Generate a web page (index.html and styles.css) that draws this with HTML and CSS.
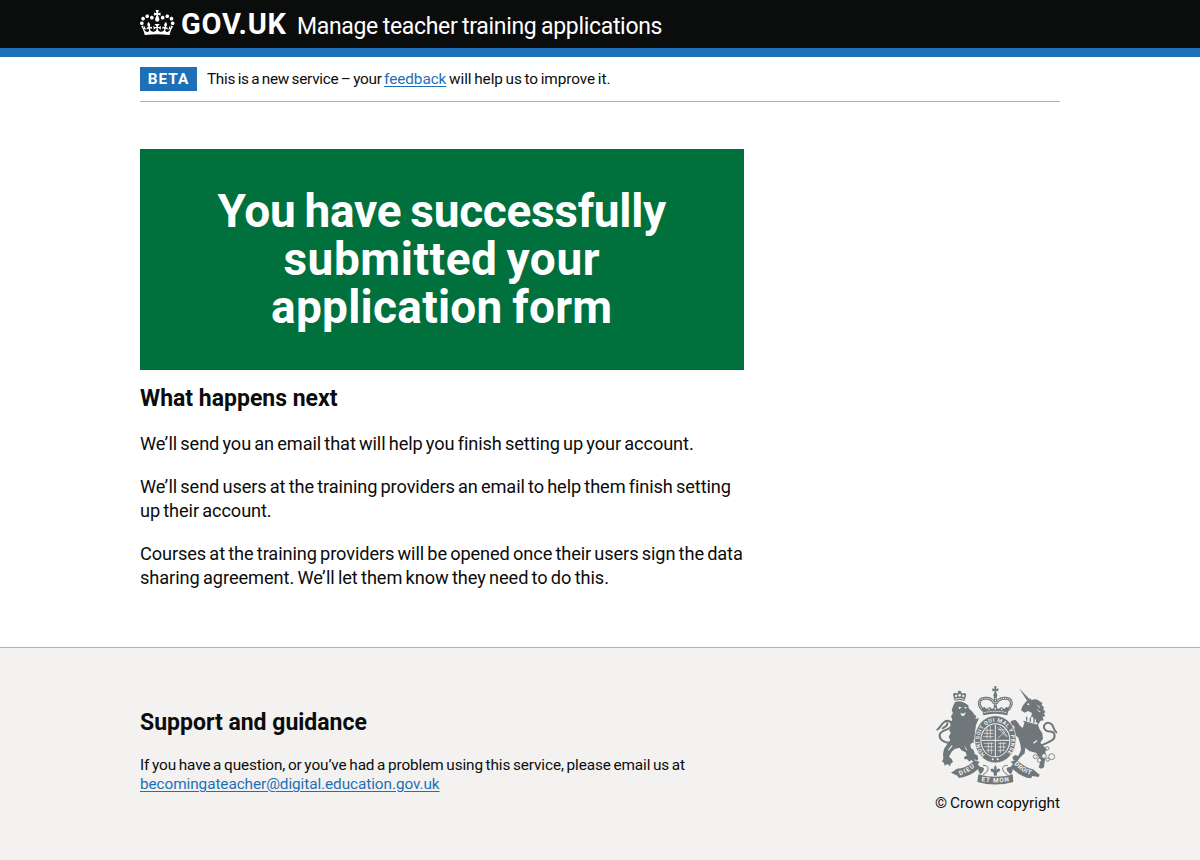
FILE: index.html
```
<!DOCTYPE html>
<html lang="en">
<head>
<meta charset="utf-8">
<title>Manage teacher training applications</title>
<link rel="stylesheet" href="styles.css">
</head>
<body>
<header class="header">
  <div class="container header-inner">
    <svg class="header-crown" viewBox="0 0 132 97" aria-hidden="true"><path fill="currentColor" fill-rule="evenodd" d="M25 30.2c3.5 1.5 7.7-.2 9.1-3.7 1.5-3.6-.2-7.8-3.9-9.2-3.6-1.4-7.6.3-9.1 3.9-1.4 3.5.3 7.5 3.9 9zM9 39.5c3.6 1.5 7.8-.2 9.2-3.7 1.5-3.6-.2-7.8-3.9-9.1-3.6-1.5-7.6.2-9.1 3.8-1.4 3.5.3 7.5 3.8 9zM4.4 57.2c3.5 1.5 7.7-.2 9.1-3.8 1.5-3.6-.2-7.7-3.9-9.1-3.5-1.5-7.6.3-9.1 3.8-1.4 3.5.3 7.6 3.9 9.1zm38.3-21.4c3.5 1.5 7.7-.2 9.1-3.8 1.5-3.6-.2-7.7-3.9-9.1-3.6-1.5-7.6.3-9.1 3.8-1.3 3.6.4 7.7 3.9 9.1zm64.4-5.6c-3.6 1.5-7.8-.2-9.1-3.7-1.5-3.6.2-7.8 3.8-9.2 3.6-1.4 7.7.3 9.2 3.9 1.3 3.5-.4 7.5-3.9 9zm15.9 9.3c-3.6 1.5-7.7-.2-9.1-3.7-1.5-3.6.2-7.8 3.7-9.1 3.6-1.5 7.7.2 9.2 3.8 1.5 3.5-.3 7.5-3.8 9zm4.7 17.7c-3.6 1.5-7.8-.2-9.2-3.8-1.5-3.6.2-7.7 3.9-9.1 3.6-1.5 7.7.3 9.2 3.8 1.3 3.5-.4 7.6-3.9 9.1zM89.3 35.8c-3.6 1.5-7.8-.2-9.2-3.8-1.4-3.6.2-7.7 3.9-9.1 3.6-1.5 7.7.3 9.2 3.8 1.4 3.6-.3 7.7-3.9 9.1zM69.7 17.7l8.9 4.7V9.3l-8.9 2.8c-.2-.3-.5-.6-.9-.9L72.4 0H59.6l3.5 11.2c-.3.3-.6.5-.9.9l-8.8-2.8v13.1l8.8-4.7c.3.3.6.7.9.9l-5 15.4v.1c-.2.8-.4 1.6-.4 2.4 0 4.1 3.1 7.5 7 8.1h.2c.3 0 .7.1 1 .1.4 0 .7 0 1-.1h.2c4-.6 7.1-4.1 7.1-8.1 0-.8-.1-1.7-.4-2.4V34l-5.1-15.4c.4-.2.7-.6 1-.9zM66 92.8c16.9 0 32.8 1.1 47.1 3.2 4-16.9 8.9-26.7 14-33.5l-9.6-3.4c1 4.9 1.1 7.2 0 10.2-1.5-1.4-3-4.3-4.2-8.7L108.6 76c2.8-2 5-3.2 7.5-3.3-4.4 9.4-10 11.9-13.6 11.2-4.3-.8-6.3-4.6-5.6-7.9 1-4.7 5.7-5.9 8-.5 4.3-8.7-3-11.4-7.6-8.8 7.1-7.2 7.9-13.5 2.1-21.1-8 6.1-8.1 12.3-4.5 20.8-4.7-5.4-12.1-2.5-9.5 6.2 3.4-5.2 7.9-2 7.2 3.1-.6 4.3-6.4 7.8-13.5 7.2-10.3-.9-10.9-8-11.2-13.8 2.5-.5 7.1 1.8 11 7.3L80.2 60c-4.1 4.4-8 5.3-12.3 5.4 1.4-4.4 8-11.6 8-11.6H55.5s6.4 7.2 7.9 11.6c-4.2-.1-8-1-12.3-5.4l1.4 16.4c3.9-5.5 8.5-7.7 10.9-7.3-.3 5.8-.9 12.8-11.1 13.8-7.2.6-12.9-2.9-13.5-7.2-.7-5 3.8-8.3 7.1-3.1 2.7-8.7-4.6-11.6-9.4-6.2 3.7-8.5 3.6-14.7-4.6-20.8-5.8 7.6-5 13.9 2.2 21.1-4.7-2.6-11.9.1-7.7 8.8 2.3-5.5 7.1-4.2 8.1.5.7 3.3-1.3 7.1-5.7 7.9-3.5.7-9-1.8-13.5-11.2 2.5.1 4.7 1.3 7.5 3.3l-4.7-15.4c-1.2 4.4-2.7 7.2-4.3 8.7-1.1-3-.9-5.3 0-10.2l-9.5 3.4c5 6.9 9.9 16.7 14 33.5 14.8-2.1 30.8-3.2 47.7-3.2z"/></svg>
    <span class="logotype">GOV.UK</span>
    <span class="product">Manage teacher training applications</span>
  </div>
</header>
<div class="blue-bar"></div>

<div class="container">
  <div class="phase">
    <strong class="tag">BETA</strong>
    <span class="phase-text"><span class="tight">This is a new service – your </span><a href="#">feedback</a> will help us to improve it.</span>
  </div>
  <main class="main">
    <div class="panel">
      <h1 class="panel-title"><span class="title-a">You have successfully</span><span class="title-b">submitted your</span><span class="title-c">application form</span></h1>
    </div>
    <h2 class="heading">What happens next</h2>
    <p class="body">We’ll send you an email that will help you finish setting up your account.</p>
    <p class="body">We’ll send users at the training providers an email to help them finish setting<br>up their account.</p>
    <p class="body">Courses at the training providers will be opened once their users sign the data<br><span class="body-last">sharing agreement. We’ll let them know they need to do this.</span></p>
  </main>
</div>

<footer class="footer">
  <div class="container footer-inner">
    <div class="support">
      <h2 class="heading">Support and guidance</h2>
      <p class="small">If you have a question, or you’ve had a problem using this service, please email us at<br><a class="email" href="#">becomingateacher@digital.education.gov.uk</a></p>
    </div>
    <div class="crown-copyright">
      <svg class="crest" viewBox="30 15 375 306" aria-hidden="true">
        <defs>
          <path id="garter" d="M180 224A48 56 0 1 1 242 224"/>
          <path id="scroll-left" d="M104 286Q132 278 155 255"/>
          <path id="scroll-mid" d="M169 303Q211 312 254 303"/>
          <path id="scroll-right" d="M267 253Q291 278 324 287"/>
        </defs>
        <!-- lion -->
        <g class="ink">
          <path d="M89 62L84 45Q83 40 88 39Q94 37 96 42Q98 36 104 36Q110 36 112 41Q116 37 121 40Q125 42 123 48L118 63Q103 57 89 62Z"/>
          <path d="M101 32h5v8h-5zM98 34h11v3h-11z"/>
          <path d="M90 66Q104 60 118 68L130 76L131 85L143 96L147 103L154 109L151 117L162 114L158 124L153 135L151 150L149 162L154 178L146 178L146 188Q139 187 136 194L138 205Q148 209 149 222L157 226L160 235L157 242L149 238L147 246L139 240L133 245L127 238L119 238L117 231L125 227L122 217L109 211L104 203L89 207L80 215L72 230L80 237L84 246L77 251L75 259L67 252L59 257L57 249L51 244L55 236L54 221L57 207L67 192L76 180L71 171L77 158L72 150L80 140L75 129L82 119L78 109L84 99L80 91L84 79Z"/>
          <path d="M131 145L154 160L164 174L156 179L149 174L139 185L127 173Z"/>
        </g>
        <g class="tail">
          <path d="M76 189C53 187 42 177 44 164C47 148 79 151 80 135C81 124 67 119 58 126C48 132 44 146 37 149"/>
          <path d="M53 145C59 139 68 139 67 130"/>
        </g>
        <g class="paper">
          <circle cx="93" cy="48" r="3.5"/><circle cx="104" cy="46" r="4"/><circle cx="115" cy="48" r="3.5"/>
          <path d="M90 56Q104 51 117 57L116 59Q104 54 91 59Z"/>
          <path d="M100 80l10 2-7 6zM118 82l8-2-5 7zM106 98l8 3 8-4-3 9-8 3z"/>
          <path d="M69 209l11-13 3 2-12 14zM117 196l10 14-3 1z"/>
        </g>
        <!-- unicorn -->
        <g class="ink">
          <path d="M282 25L314 58L307 63Z"/>
          <path d="M304 64L318 55L319 61Q334 54 344 64L352 69L350 75L358 83L354 87L362 97L356 99L361 109L353 110L356 121L347 122L339 134L343 146L352 160L354 176L346 188L357 200L369 207L361 214L362 229L359 245L357 262L348 266L341 262L345 249L343 235L334 219L313 213L301 203L299 220L286 232L276 245L265 240L262 231L271 225L280 228L288 210L286 193L280 173L265 160L269 140L257 132L258 123L271 119L278 127L285 137L293 144L299 126L318 111L321 99L309 93L299 98L288 91L293 77Z"/>
        </g>
        <path class="tail" d="M351 195C377 184 393 180 388 162C384 150 371 158 362 151C348 139 364 121 379 132C388 139 384 149 394 157"/>
        <g class="paper">
          <circle cx="310" cy="73" r="3"/>
          <path d="M298 103l6-1 4 7 6-4 3 8 7-3 2 9 7-1-1 8 6 3-4 7-18-5-19-9z"/>
          <path d="M335 180l-11 8 2 3 11-7z"/>
          <path d="M334 73l12 9-3 1zM333 86l14 9-4 1z"/>
        </g>
        <path class="ink" d="M296 122L337 134L334 138L295 126ZM303 110h4v12h-4zM314 113h4v13h-4zM325 118h4v12h-4z"/>
        <g class="chain"><circle cx="331" cy="230" r="6"/><circle cx="343" cy="241" r="6"/><circle cx="357" cy="228" r="7"/><circle cx="368" cy="239" r="5"/><circle cx="380" cy="230" r="9"/><circle cx="367" cy="205" r="5"/></g>
        <!-- imperial crown -->
        <path class="ink" d="M207 19h8l-2 8 7-2v9l-7-2 2 9h-8l2-9-7 2v-9l7 2zM211 40a6 6 0 1 1 0 12a6 6 0 1 1 0-12z"/>
        <path class="crown-arch" d="M174 91C155 71 163 56 180 55C194 54 203 60 208 70M248 91C267 71 259 56 242 55C228 54 219 60 214 70M211 50V86"/>
        <path class="pearls" d="M174 91C155 71 163 56 180 55C194 54 203 60 208 70M248 91C267 71 259 56 242 55C228 54 219 60 214 70M211 56V78"/>
        <path class="ink" d="M170 84l9-3 5 6 9-6 9 6 9-8 9 8 9-6 9 6 5-6 9 3-5 22q-36-9-72 0z"/>
        <path class="crown-band" d="M176 98Q211 90 246 98"/>
        <g class="paper"><circle cx="192" cy="88" r="2.5"/><circle cx="211" cy="86" r="2.5"/><circle cx="230" cy="88" r="2.5"/></g>
        <!-- garter -->
        <ellipse class="garter-gap" cx="211" cy="178" rx="62" ry="71"/>
        <text class="motto"><textPath href="#garter" textLength="250" lengthAdjust="spacing">HONI SOIT QUI MAL Y PENSE</textPath></text>
        <ellipse class="paper" cx="211" cy="181" rx="45" ry="51"/>
        <ellipse class="ink" cx="211" cy="181" rx="42" ry="48"/>
        <path class="shield-cross" d="M211 134V228M170 181H252"/>
        <path class="shield-lines" d="M181 151h25M176 160h30M174 170h32M186 143v33M196 138v39M218 142l25 28M224 139l23 31M244 151l-26 24M219 149h22M176 190h30M178 200h28M184 211h22M190 187v31M199 187v36M219 190l25 0M218 201h25M218 212h20M226 186v34M236 186v27"/>
        <g class="paper"><circle cx="203" cy="238" r="3"/><circle cx="218" cy="238" r="3"/></g>
        <!-- scrolls -->
        <path class="ink" d="M78 278L96 266Q124 266 148 241L164 246L158 253Q163 262 176 260Q178 269 174 277L166 283Q159 276 160 267Q133 291 101 294L97 287Z"/>
        <path class="ink" d="M344 284L324 268Q301 264 275 239L257 245L264 253Q259 262 246 260Q242 268 248 277L257 283Q264 276 263 267Q288 291 318 295L322 288L341 291Z"/>
        <path class="ink" d="M160 283Q211 298 263 283L265 306Q211 321 157 306Z"/>
        <path class="paper" d="M165 249Q157 256 171 257Q187 257 188 266Q188 275 176 281L170 279Q180 270 178 265Q175 261 164 260ZM257 249Q265 256 251 257Q235 257 234 266Q234 275 246 281L252 279Q242 270 244 265Q247 261 258 260Z"/>
        <path class="scroll-edge" d="M174 256Q191 256 189 268Q188 277 174 284M248 256Q231 256 233 268Q234 277 248 284"/>
        <path class="ink" d="M211 254Q217 263 214 270Q220 262 225 268Q227 275 217 277L215 287H207L205 277Q195 275 197 268Q202 262 208 270Q205 263 211 254Z"/>
        <g class="words">
          <text><textPath href="#scroll-left" textLength="52">DIEU</textPath></text>
          <text><textPath href="#scroll-mid" textLength="84">ET MON</textPath></text>
          <text><textPath href="#scroll-right" textLength="59">DROIT</textPath></text>
        </g>
      </svg>
      <span class="copyright">© Crown copyright</span>
    </div>
  </div>
</footer>
</body>
</html>
```
FILE: styles.css
```
html { background: #f3f2f1; }
body {
  margin: 0;
  background: #fff;
  color: #0b0c0c;
  font-family: Roboto, "Liberation Sans", sans-serif;
  font-size: 15.33px;
  line-height: 19.17px;
}
h1, h2, p { margin: 0; }
a { color: #1d70b8; text-decoration: underline; text-decoration-thickness: 1px; text-underline-offset: 2px; }
.container { width: 920px; margin: 0 auto; }

.header { height: 48px; background: #0b0c0c; color: #fff; }
.header-inner { display: flex; box-sizing: border-box; height: 48px; padding-top: 1px; align-items: baseline; }
.header-crown { width: 34.5px; height: 25.4px; margin-right: 6.5px; align-self: flex-start; margin-top: 9px; }
.logotype { font-size: 29px; font-weight: 700; line-height: 47px; letter-spacing: .75px; width: 116px; white-space: nowrap; }
.product { font-size: 23px; line-height: 48px; letter-spacing: -.32px; word-spacing: -.7px; white-space: nowrap; }
.blue-bar { height: 9.3px; background: #1d70b8; }

.phase { display: flex; align-items: center; gap: 10px; padding: 9.6px 0; border-bottom: 1px solid #b1b4b6; height: 24.7px; }
.tag { background: #1d70b8; color: #fff; width: 57px; height: 24px; line-height: 24px; text-align: center; letter-spacing: .95px; }
.phase-text { padding-top: 1px; word-spacing: -1px; letter-spacing: -.07px; white-space: nowrap; }
.tight { letter-spacing: -.28px; }

.main { width: 603.5px; padding: 46.8px 0 56.8px; }
.panel { box-sizing: border-box; height: 221px; padding: 39.3px 38.3px 38px; background: #00703c; color: #fff; text-align: center; }
.panel-title { font-size: 46px; line-height: 47.9px; font-weight: 700; }
.panel-title span { display: block; white-space: nowrap; }
.title-a { letter-spacing: -.3px; word-spacing: -2px; }
.title-b { letter-spacing: .55px; word-spacing: -3px; }
.title-c { letter-spacing: .25px; word-spacing: -2px; }
.heading { font-size: 23px; line-height: 28.75px; font-weight: 700; margin-bottom: 18.2px; }
.main .heading { margin-top: 15.4px; }
.body { font-size: 18.2px; line-height: 23.95px; letter-spacing: -.095px; word-spacing: -1.2px; white-space: nowrap; }
.body + .body { margin-top: 19.17px; }
.body-last { letter-spacing: -.06px; }

.footer { background: #f3f2f1; border-top: 1px solid #b1b4b6; min-height: 212px; box-sizing: border-box; }
.footer-inner { display: flex; justify-content: space-between; padding-top: 37.3px; }
.support { padding-top: 23.7px; }
.support .heading { margin-bottom: 17.7px; }
.small { word-spacing: -1px; letter-spacing: -.105px; white-space: nowrap; }
.email { letter-spacing: -.075px; }
.crown-copyright { display: flex; flex-direction: column; align-items: flex-end; }
.crest { width: 125px; height: 102px; }
.copyright { margin-top: 7px; word-spacing: -1px; white-space: nowrap; }

.crest .ink { fill: #6f777b; }
.crest .paper { fill: #f3f2f1; }
.tail { fill: none; stroke: #6f777b; stroke-width: 6; stroke-linecap: round; }
.chain { fill: #f3f2f1; stroke: #6f777b; stroke-width: 2.6; }
.crown-arch { fill: none; stroke: #6f777b; stroke-width: 9; }
.pearls { fill: none; stroke: #f3f2f1; stroke-width: 3.5; stroke-dasharray: .1 6; stroke-linecap: round; }
.crown-band { fill: none; stroke: #f3f2f1; stroke-width: 3; stroke-dasharray: 6 3; }
.garter-gap { fill: #6f777b; stroke: #f3f2f1; stroke-width: 2; }
.motto, .words { fill: #f3f2f1; font-weight: 700; }
.motto { font-size: 16px; }
.words { font-size: 19px; }
.shield-cross { fill: none; stroke: #f3f2f1; stroke-width: 3; }
.shield-lines { fill: none; stroke: #f3f2f1; stroke-width: 2; }
.scroll-edge { fill: none; stroke: #6f777b; stroke-width: 3; }
```
